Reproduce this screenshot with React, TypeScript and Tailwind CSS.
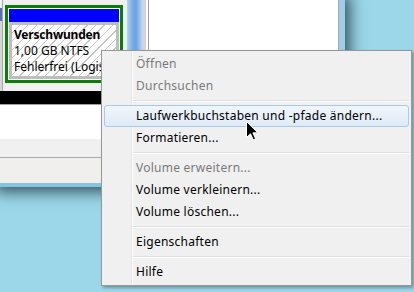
const font = { fontFamily: '"Noto Sans", "Open Sans", sans-serif' };

type Entry = { label?: string; disabled?: boolean; active?: boolean; sep?: boolean };

const entries: Entry[] = [
  { label: "Öffnen", disabled: true },
  { label: "Durchsuchen", disabled: true },
  { sep: true },
  { label: "Laufwerkbuchstaben und -pfade ändern...", active: true },
  { label: "Formatieren..." },
  { sep: true },
  { label: "Volume erweitern...", disabled: true },
  { label: "Volume verkleinern..." },
  { label: "Volume löschen..." },
  { sep: true },
  { label: "Eigenschaften" },
  { sep: true },
  { label: "Hilfe" },
];

function Partition() {
  return (
    <div className="mt-[5px] w-[118px] h-[78px] shrink-0 border-[3px] border-[#0a7d0a] bg-white p-[1px] flex flex-col">
      <div className="h-[13px] bg-[#0000ff]" />
      <div className="flex-1 border-[3px] border-[#bdbdbd] bg-[repeating-linear-gradient(135deg,#ffffff_0px,#ffffff_5px,#c4c4c4_5px,#c4c4c4_6px)] pl-[2px] pt-[2px] overflow-hidden text-[12px] leading-[16px] text-black whitespace-nowrap">
        <div className="font-bold tracking-[-0.2px]">Verschwunden</div>
        <div>1,00 GB NTFS</div>
        <div>Fehlerfrei (Logisches Laufwerk)</div>
      </div>
    </div>
  );
}

function DiskWindow() {
  return (
    <div className="w-[345px] h-[187px] flex flex-col border-r-[6px] border-b-[4px] border-r-[#9dcfea] border-b-[#86c5e2] shadow-[0_0_14px_5px_rgba(20,40,50,0.75)] bg-white">
      <div className="h-[91px] flex shrink-0">
        <div className="w-[5px] flex">
          <div className="w-[2px] flex flex-col">
            <div className="h-[8px] bg-[#f2f2f2]" />
            <div className="h-[13px] bg-[#5d6db4]" />
            <div className="flex-1 bg-[#d6d6d6]" />
          </div>
          <div className="w-[1px] bg-[#a8a8a8]" />
          <div className="w-[2px] bg-[#eeeeee]" />
        </div>
        <div className="bg-[#f0f0f0] flex">
          <Partition />
        </div>
        <div className="w-[4px] bg-[#f0f0f0]" />
        <div className="w-[16px] bg-[linear-gradient(90deg,#b7d3f3_0%,#7fb0e8_30%,#6aa2e2_55%,#a6c7ef_85%,#c9ddf6_100%)]" />
        <div className="w-[3px] bg-[#d4d4d4]" />
        <div className="w-[2px] bg-white" />
        <div className="w-[1px] bg-[#a0a0a0]" />
        <div className="flex-1 bg-white border-r border-[#a9a9a9]" />
      </div>
      <div className="h-[13px] bg-black shrink-0" />
      <div className="h-[35px] bg-white border-t border-[#a0a0a0] shrink-0" />
      <div className="h-[18px] bg-[#f0f0f0] shrink-0" />
      <div className="flex-1 bg-[#f0efee] border-t border-[#a9a9a9]" />
    </div>
  );
}

function ContextMenu() {
  return (
    <div
      className="absolute left-[101px] top-[50px] w-[311px] border border-[#979797] bg-[#f0f0f0] p-[2px] shadow-[2px_2px_3px_rgba(0,0,0,0.3)] text-[12px] tracking-[0.25px]"
      style={font}
    >
      <div className="absolute left-[29px] top-0 bottom-0 w-[1px] bg-[#e2e3e3]" />
      <div className="absolute left-[30px] top-0 bottom-0 w-[1px] bg-white" />
      {entries.map((e, i) =>
        e.sep ? (
          <div key={i} className="h-[8px] flex flex-col justify-center pl-[28px]">
            <div className="h-[1px] bg-[#e0e0e0]" />
            <div className="h-[1px] bg-white" />
          </div>
        ) : (
          <div
            key={i}
            className={
              "relative h-[22px] flex items-center pl-[31px] border rounded-[3px] " +
              (e.active
                ? "border-[#a9c8ea] bg-[linear-gradient(180deg,#f1f6fc,#dfeaf7)]"
                : "border-transparent") +
              (e.disabled ? " text-[#7a7a7a]" : " text-black")
            }
          >
            {e.label}
          </div>
        )
      )}
    </div>
  );
}

function Cursor() {
  return (
    <svg className="absolute left-[246px] top-[121px]" width="13" height="20" viewBox="0 0 13 20">
      <path
        d="M0.5 0.5 L0.5 16.5 L4.5 12.8 L7.3 18.8 L9.6 17.8 L6.9 11.8 L11.8 11.8 Z"
        fill="black"
        stroke="white"
        strokeWidth="1"
        strokeLinejoin="miter"
      />
    </svg>
  );
}

export default function App() {
  return (
    <div className="relative w-[414px] h-[292px] overflow-hidden bg-[#9bd7e9]" style={font}>
      <DiskWindow />
      <ContextMenu />
      <Cursor />
    </div>
  );
}
